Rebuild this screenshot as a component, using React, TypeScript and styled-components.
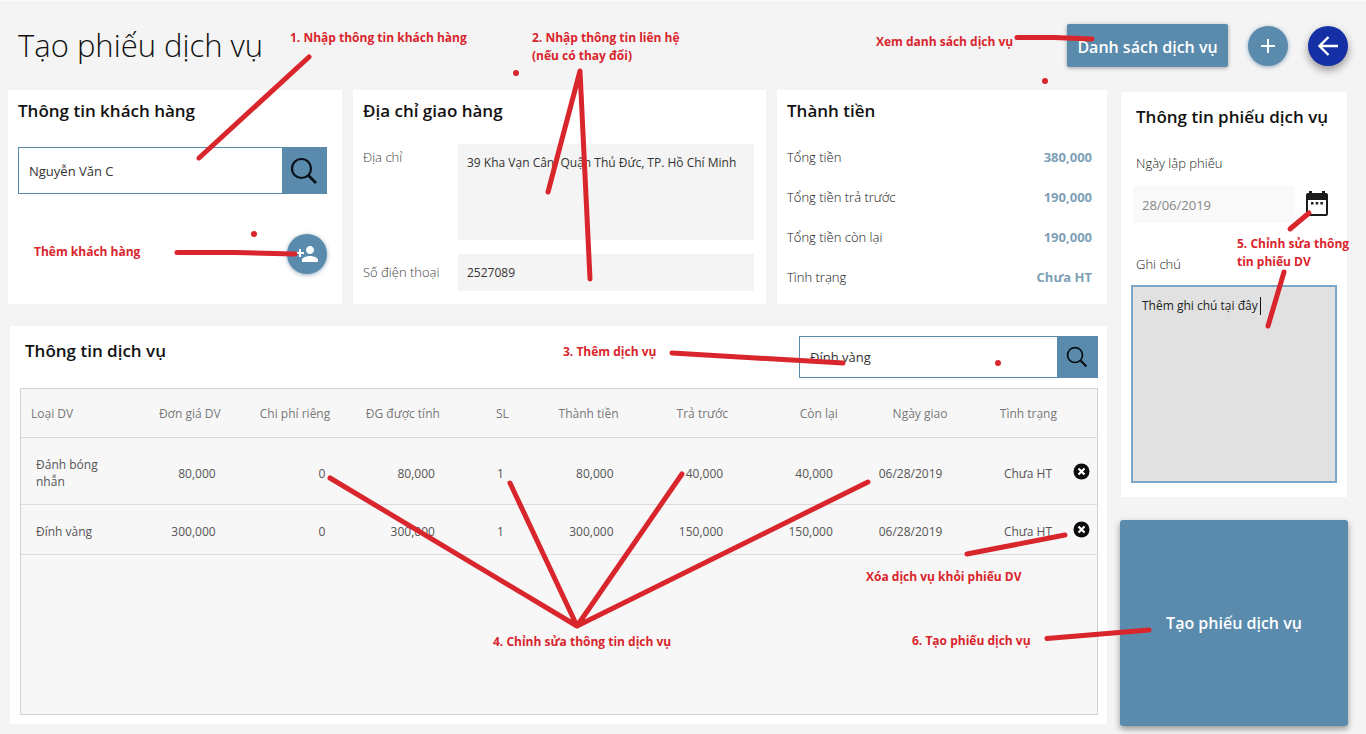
import React from "react";
import styled, { createGlobalStyle } from "styled-components";
import { MdPersonAdd } from "react-icons/md";

const blue = "#5a8bad";
const red = "#d9252c";

const GlobalStyle = createGlobalStyle`
  *, *::before, *::after { box-sizing: border-box; }
  body {
    margin: 0;
    background: #f4f4f4;
    color: #1c1c1c;
    font-family: "Open Sans", "Noto Sans", sans-serif;
    font-size: 13px;
  }
  input, textarea, button { font-family: inherit; }
`;

const Page = styled.div`
  position: relative;
  display: flex;
  flex-direction: column;
  min-height: 100vh;
  min-width: 1200px;
  border-top: 1px solid #fcfcfc;
`;

const Header = styled.header`
  display: flex;
  align-items: center;
  justify-content: space-between;
  height: 89px;
  padding: 0 18px;
`;

const Title = styled.h1`
  margin: 0;
  padding-bottom: 2px;
  font-size: 31px;
  line-height: 48px;
  font-weight: 300;
  color: #111;
`;

const HeaderActions = styled.div`
  display: flex;
  align-items: center;
  gap: 20px;
`;

const ListLink = styled.a`
  display: flex;
  align-items: center;
  justify-content: center;
  width: 161px;
  height: 43px;
  padding-top: 3px;
  border-radius: 2px;
  background: ${blue};
  color: #fff;
  font-size: 16px;
  font-weight: 600;
  text-decoration: none;
  white-space: nowrap;
  box-shadow: 0 1px 4px rgba(0, 0, 0, 0.35);
`;

const RoundButton = styled.button<{ $dark?: boolean }>`
  display: flex;
  align-items: center;
  justify-content: center;
  width: 40px;
  height: 40px;
  padding: 0;
  border: 0;
  border-radius: 50%;
  color: #fff;
  background: ${(p) => (p.$dark ? "#1530a5" : blue)};
  box-shadow: ${(p) =>
    p.$dark ? "0 4px 8px rgba(0, 0, 0, 0.4)" : "0 1px 4px rgba(40, 90, 130, 0.5)"};
`;

const Main = styled.main`
  flex: 1;
  display: grid;
  grid-template-columns: minmax(0, 1fr) 228px;
  gap: 13px;
  padding: 0 18px 8px 8px;
`;

const LeftColumn = styled.div`
  display: flex;
  flex-direction: column;
  gap: 22px;
  padding-bottom: 2px;
`;

const SideColumn = styled.aside`
  display: flex;
  flex-direction: column;
  gap: 23px;
  padding-top: 2px;
`;

const TopCards = styled.div`
  display: grid;
  grid-template-columns: 334fr 413fr 330fr;
  gap: 11px;
`;

const Card = styled.section`
  min-height: 214px;
  padding: 8px 10px 12px;
  background: #fff;
`;

const CardTitle = styled.h2`
  margin: 0;
  font-size: 17px;
  line-height: 26px;
  font-weight: 600;
  color: #111;
  white-space: nowrap;
`;

const SearchBox = styled.form<{ $small?: boolean }>`
  display: flex;
  height: ${(p) => (p.$small ? 42 : 47)}px;
  width: ${(p) => (p.$small ? "299px" : "auto")};
  border: 1px solid ${blue};
  background: #fff;
`;

const SearchInput = styled.input`
  flex: 1;
  min-width: 0;
  padding: 0 10px;
  border: 0;
  outline: 0;
  background: transparent;
  color: #333;
  font-size: 13px;
`;

const SearchButton = styled.button<{ $small?: boolean }>`
  display: flex;
  align-items: center;
  justify-content: center;
  width: ${(p) => (p.$small ? 40 : 44)}px;
  padding: 0;
  border: 0;
  background: ${blue};
  color: #0a1018;
`;

const CustomerBody = styled.div`
  display: flex;
  flex-direction: column;
  gap: 40px;
  padding: 23px 5px 0 0;
`;

const AddCustomer = styled.div`
  display: flex;
  justify-content: flex-end;
`;

const AddressForm = styled.div`
  display: grid;
  grid-template-columns: 95px minmax(0, 1fr);
  row-gap: 14px;
  padding: 20px 2px 0 0;
`;

const FieldLabel = styled.label`
  font-size: 13px;
  line-height: 26px;
  font-weight: 300;
  color: #444;
`;

const PhoneLabel = styled(FieldLabel)`
  line-height: 37px;
`;

const AddressArea = styled.textarea`
  display: block;
  width: 100%;
  height: 96px;
  padding: 10px 9px;
  border: 0;
  outline: 0;
  resize: none;
  background: #f4f4f4;
  color: #333;
  font-size: 12px;
  line-height: 18px;
`;

const FieldInput = styled.input<{ $muted?: boolean }>`
  width: 100%;
  height: 37px;
  padding: 0 9px;
  border: 0;
  outline: 0;
  background: ${(p) => (p.$muted ? "#f9f9f9" : "#f4f4f4")};
  color: ${(p) => (p.$muted ? "#888" : "#333")};
  font-size: ${(p) => (p.$muted ? 13 : 12)}px;
`;

const Totals = styled.dl`
  display: flex;
  flex-direction: column;
  gap: 16px;
  margin: 0;
  padding: 21px 5px 0 0;
`;

const TotalRow = styled.div`
  display: flex;
  justify-content: space-between;
  line-height: 24px;
`;

const TotalName = styled.dt`
  font-size: 13px;
  font-weight: 300;
  color: #111;
`;

const TotalValue = styled.dd`
  margin: 0;
  font-size: 13px;
  font-weight: 700;
  color: #7d9fb6;
`;

const ServiceCard = styled(Card)`
  flex: 1;
  display: flex;
  flex-direction: column;
  gap: 10px;
  margin-left: 2px;
  padding: 10px 9px 9px 10px;
`;

const ServiceHead = styled.div`
  display: flex;
  justify-content: space-between;
  padding-left: 5px;
`;

const ServiceTitle = styled(CardTitle)`
  line-height: 30px;
`;

const TableFrame = styled.div`
  flex: 1;
  border: 1px solid #d2d2d2;
  background: #f7f7f7;
`;

const Table = styled.table`
  width: 100%;
  table-layout: fixed;
  border-collapse: separate;
  border-spacing: 0;
`;

const Col = styled.col<{ $w?: number }>`
  width: ${(p) => (p.$w ? `${p.$w}px` : "auto")};
`;

const Th = styled.th<{ $left?: boolean }>`
  height: 49px;
  padding: ${(p) => (p.$left ? "0 0 0 10px" : "0 10px 0 0")};
  border-bottom: 1px solid #d8d8d8;
  text-align: ${(p) => (p.$left ? "left" : "right")};
  font-size: 12px;
  font-weight: 500;
  color: #777;
  white-space: nowrap;
`;

const Td = styled.td<{ $left?: boolean; $tall?: boolean }>`
  height: ${(p) => (p.$tall ? 67 : 50)}px;
  padding: ${(p) => (p.$left ? "4px 15px 0" : "4px 15px 0 0")};
  border-bottom: 1px solid #dcdcdc;
  text-align: ${(p) => (p.$left ? "left" : "right")};
  font-size: 12px;
  line-height: 17px;
  color: #555;
`;

const ActionTd = styled(Td)`
  padding: 0 7px 0 0;
`;

const DeleteButton = styled.button`
  display: flex;
  margin-left: auto;
  padding: 0;
  border: 0;
  background: transparent;
`;

const TicketCard = styled(Card)`
  margin: 0 1px;
  padding: 12px 10px 14px;
`;

const TicketTitle = styled(CardTitle)`
  padding-left: 5px;
`;

const TicketLabel = styled(FieldLabel)<{ $gap: number }>`
  display: block;
  padding-left: 5px;
  margin-top: ${(p) => p.$gap}px;
  color: #222;
`;

const DateRow = styled.div`
  display: grid;
  grid-template-columns: 162px 24px;
  gap: 10px;
  align-items: center;
  margin-top: 10px;
  padding-left: 2px;
`;

const IconButton = styled.button`
  display: flex;
  padding: 0;
  border: 0;
  background: transparent;
`;

const NoteArea = styled.textarea`
  display: block;
  width: 100%;
  height: 198px;
  margin-top: 8px;
  padding: 10px 9px;
  border: 2px solid #7aa6c9;
  outline: 0;
  resize: none;
  background: #e1e1e1;
  color: #222;
  font-size: 12px;
  line-height: 18px;
`;

const SubmitButton = styled.button`
  flex: 1;
  min-height: 206px;
  border: 0;
  border-radius: 3px;
  background: ${blue};
  color: #fff;
  font-size: 16px;
  font-weight: 600;
  box-shadow: 0 3px 6px rgba(0, 0, 0, 0.4);
`;

const Overlay = styled.div`
  position: absolute;
  inset: -1px 0 0;
  pointer-events: none;
`;

const Strokes = styled.svg`
  display: block;
  width: 100%;
  height: 734px;
`;

const Note = styled.span<{ $x: number; $y: number }>`
  position: absolute;
  left: ${(p) => (p.$x / 1366) * 100}%;
  top: ${(p) => p.$y}px;
  font-size: 12px;
  line-height: 18px;
  font-weight: 700;
  color: ${red};
  white-space: pre;
`;

const SearchIcon = ({ size }: { size: number }) => (
  <svg width={size} height={size} viewBox="0 0 28 28" fill="none" stroke="currentColor">
    <circle cx="11.5" cy="11.5" r="9.5" strokeWidth="2.2" />
    <path d="M18.2 18.2 L26 26" strokeWidth="2.8" />
  </svg>
);

const PlusIcon = () => (
  <svg width="16" height="16" viewBox="0 0 16 16" stroke="#fff" strokeWidth="2">
    <path d="M8 1V15M1 8H15" />
  </svg>
);

const BackIcon = () => (
  <svg width="22" height="22" viewBox="0 0 22 22" fill="none" stroke="#fff" strokeWidth="2.4">
    <path d="M21 11H3M11.5 2L2.5 11L11.5 20" />
  </svg>
);

const CalendarIcon = () => (
  <svg width="24" height="27" viewBox="0 0 24 27" fill="#1c1c1c">
    <path
      fillRule="evenodd"
      d="M4 0h3v2h10V0h3v2h1a2 2 0 0 1 2 2v19a2 2 0 0 1-2 2H3a2 2 0 0 1-2-2V4a2 2 0 0 1 2-2h1zM3 9v14h18V9z"
    />
    <path d="M6 11h2.500v2.500H6zM10.700 11h2.500v2.500h-2.500zM15.400 11h2.500v2.500h-2.500z" />
  </svg>
);

const DeleteIcon = () => (
  <svg width="17" height="17" viewBox="0 0 17 17">
    <circle cx="8.5" cy="8.5" r="8" fill="#0c0c0c" />
    <path d="M5.5 5.5L11.5 11.5M11.5 5.5L5.5 11.5" stroke="#fff" strokeWidth="2.2" />
  </svg>
);

const totals = [
  ["Tổng tiền", "380,000"],
  ["Tổng tiền trả trước", "190,000"],
  ["Tổng tiền còn lại", "190,000"],
  ["Tình trạng", "Chưa HT"],
];

const columns = [
  "Loại DV",
  "Đơn giá DV",
  "Chi phí riêng",
  "ĐG được tính",
  "SL",
  "Thành tiền",
  "Trả trước",
  "Còn lại",
  "Ngày giao",
  "Tình trạng",
];

const services = [
  ["Đánh bóng nhẫn", "80,000", "0", "80,000", "1", "80,000", "40,000", "40,000", "06/28/2019", "Chưa HT"],
  ["Đính vàng", "300,000", "0", "300,000", "1", "300,000", "150,000", "150,000", "06/28/2019", "Chưa HT"],
];

const notes = [
  { x: 290, y: 29, text: "1. Nhập thông tin khách hàng" },
  { x: 532, y: 29, text: "2. Nhập thông tin liên hệ\n(nếu có thay đổi)" },
  { x: 876, y: 33, text: "Xem danh sách dịch vụ" },
  { x: 34, y: 243, text: "Thêm khách hàng" },
  { x: 563, y: 343, text: "3. Thêm dịch vụ" },
  { x: 493, y: 633, text: "4. Chỉnh sửa thông tin dịch vụ" },
  { x: 1237, y: 235, text: "5. Chỉnh sửa thông\ntin phiếu DV" },
  { x: 866, y: 568, text: "Xóa dịch vụ khỏi phiếu DV" },
  { x: 912, y: 632, text: "6. Tạo phiếu dịch vụ" },
];

const strokes = [
  "M309 57L199 158",
  "M177 252.5H235L295 254",
  "M548 192L580 71L590 279",
  "M1017 37.5H1054L1092 39",
  "M672 353L843 363",
  "M330 478L577 626L510 483M682 474L577 626L868 482",
  "M967 554L1065 535",
  "M1047 638.5L1149 630",
  "M1290 229L1309 213",
  "M1284 272L1268 326",
];

const dots = [
  [254, 234],
  [516, 73],
  [1045, 81],
  [998, 363],
];

const stop = (e: React.FormEvent) => e.preventDefault();

export default function App() {
  return (
    <Page>
      <GlobalStyle />
      <Header>
        <Title>Tạo phiếu dịch vụ</Title>
        <HeaderActions>
          <ListLink href="#list">Danh sách dịch vụ</ListLink>
          <RoundButton type="button" aria-label="Thêm mới">
            <PlusIcon />
          </RoundButton>
          <RoundButton type="button" aria-label="Quay lại" $dark>
            <BackIcon />
          </RoundButton>
        </HeaderActions>
      </Header>

      <Main>
        <LeftColumn>
          <TopCards>
            <Card>
              <CardTitle>Thông tin khách hàng</CardTitle>
              <CustomerBody>
                <SearchBox onSubmit={stop}>
                  <SearchInput aria-label="Khách hàng" defaultValue="Nguyễn Văn C" />
                  <SearchButton type="submit" aria-label="Tìm khách hàng">
                    <SearchIcon size={28} />
                  </SearchButton>
                </SearchBox>
                <AddCustomer>
                  <RoundButton type="button" aria-label="Thêm khách hàng">
                    <MdPersonAdd size={24} />
                  </RoundButton>
                </AddCustomer>
              </CustomerBody>
            </Card>

            <Card>
              <CardTitle>Địa chỉ giao hàng</CardTitle>
              <AddressForm>
                <FieldLabel htmlFor="address">Địa chỉ</FieldLabel>
                <AddressArea
                  id="address"
                  defaultValue="39 Kha Vạn Cân, Quận Thủ Đức, TP. Hồ Chí Minh"
                />
                <PhoneLabel htmlFor="phone">Số điện thoại</PhoneLabel>
                <FieldInput id="phone" defaultValue="2527089" />
              </AddressForm>
            </Card>

            <Card>
              <CardTitle>Thành tiền</CardTitle>
              <Totals>
                {totals.map(([name, value]) => (
                  <TotalRow key={name}>
                    <TotalName>{name}</TotalName>
                    <TotalValue>{value}</TotalValue>
                  </TotalRow>
                ))}
              </Totals>
            </Card>
          </TopCards>

          <ServiceCard>
            <ServiceHead>
              <ServiceTitle>Thông tin dịch vụ</ServiceTitle>
              <SearchBox $small onSubmit={stop}>
                <SearchInput aria-label="Dịch vụ" defaultValue="Đính vàng" />
                <SearchButton $small type="submit" aria-label="Tìm dịch vụ">
                  <SearchIcon size={22} />
                </SearchButton>
              </SearchBox>
            </ServiceHead>
            <TableFrame>
              <Table>
                <colgroup>
                  {columns.map((c) => (
                    <Col key={c} $w={c === "Loại DV" ? 100 : c === "SL" ? 69 : undefined} />
                  ))}
                  <Col $w={30} />
                </colgroup>
                <thead>
                  <tr>
                    {columns.map((c, i) => (
                      <Th key={c} $left={i === 0} scope="col">
                        {c}
                      </Th>
                    ))}
                    <Th />
                  </tr>
                </thead>
                <tbody>
                  {services.map((row, r) => (
                    <tr key={row[0]}>
                      {row.map((cell, i) => (
                        <Td key={i} $left={i === 0} $tall={r === 0}>
                          {cell}
                        </Td>
                      ))}
                      <ActionTd>
                        <DeleteButton type="button" aria-label="Xóa dịch vụ">
                          <DeleteIcon />
                        </DeleteButton>
                      </ActionTd>
                    </tr>
                  ))}
                </tbody>
              </Table>
            </TableFrame>
          </ServiceCard>
        </LeftColumn>

        <SideColumn>
          <TicketCard>
            <TicketTitle>Thông tin phiếu dịch vụ</TicketTitle>
            <TicketLabel htmlFor="date" $gap={20}>
              Ngày lập phiếu
            </TicketLabel>
            <DateRow>
              <FieldInput id="date" $muted defaultValue="28/06/2019" />
              <IconButton type="button" aria-label="Chọn ngày">
                <CalendarIcon />
              </IconButton>
            </DateRow>
            <TicketLabel htmlFor="note" $gap={28}>
              Ghi chú
            </TicketLabel>
            <NoteArea id="note" defaultValue="Thêm ghi chú tại đây" />
          </TicketCard>
          <SubmitButton type="button">Tạo phiếu dịch vụ</SubmitButton>
        </SideColumn>
      </Main>

      <Overlay>
        {notes.map((n) => (
          <Note key={n.text} $x={n.x} $y={n.y}>
            {n.text}
          </Note>
        ))}
        <Strokes viewBox="0 0 1366 734" preserveAspectRatio="none" aria-hidden="true">
          <path d="M1260.5 297V315" stroke="#111" strokeWidth="1" />
          <g fill="none" stroke={red} strokeWidth="5" strokeLinecap="round" strokeLinejoin="round">
            {strokes.map((d) => (
              <path key={d} d={d} />
            ))}
          </g>
          {dots.map(([cx, cy]) => (
            <circle key={cx} cx={cx} cy={cy} r="3" fill={red} />
          ))}
        </Strokes>
      </Overlay>
    </Page>
  );
}
